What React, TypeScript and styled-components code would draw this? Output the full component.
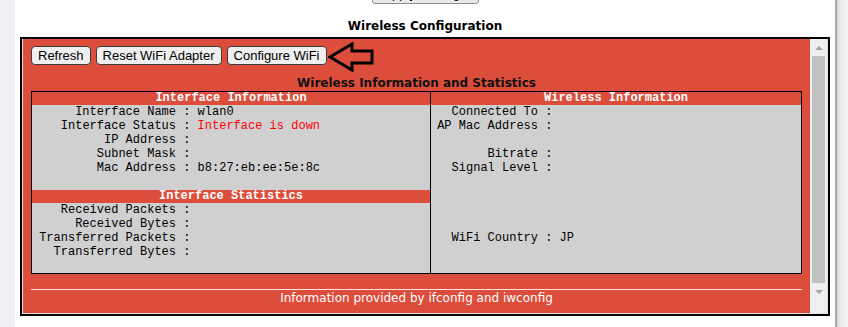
import React from "react";
import styled, { createGlobalStyle } from "styled-components";

const GlobalStyle = createGlobalStyle`
  html, body {
    margin: 0;
    padding: 0;
    background: #ffffff;
    overflow: hidden;
  }
`;

const Page = styled.div`
  display: flex;
  width: 848px;
  height: 327px;
  overflow: hidden;
`;

const LeftStrip = styled.div`
  width: 15px;
  flex: none;
  background: #eef0f5;
`;

const RightStrip = styled.div`
  width: 13px;
  flex: none;
  border-left: 2px solid #a9a9a9;
  background: linear-gradient(to right, #d9d9d9, #ececec 40%, #f2f2f2);
  box-sizing: border-box;
`;

const Main = styled.div`
  flex: 1;
  display: flex;
  flex-direction: column;
  align-items: center;
  background: #ffffff;
`;

const TopButton = styled.button`
  margin-top: -17px;
  width: 107px;
  height: 21px;
  border: 1px solid #8f8f8f;
  border-radius: 3px;
  background: #e9e9e9;
  font: 13px "Liberation Sans", Arial, sans-serif;
  color: #000;
  padding: 0;
`;

const PageTitle = styled.div`
  margin-top: 15px;
  height: 15px;
  font: bold 12px "DejaVu Sans", Verdana, sans-serif;
  line-height: 15px;
  color: #000;
`;

const Frame = styled.div`
  margin-top: 3px;
  width: 810px;
  height: 279px;
  box-sizing: border-box;
  border: 2px solid #000;
  display: flex;
`;

const Inner = styled.div`
  flex: 1;
  display: flex;
  border-left: 1px solid #e2e2e2;
  border-right: 1px solid #e2e2e2;
  border-bottom: 1px solid #e2e2e2;
`;

const Content = styled.div`
  flex: 1;
  background: #dd4d3b;
  padding: 7px 8px 0 8px;
  display: flex;
  flex-direction: column;
`;

const ScrollBar = styled.div`
  width: 17px;
  flex: none;
  background: #f0f0f0;
  display: flex;
  flex-direction: column;
  align-items: center;
`;

const Arrow = styled.div<{ $down?: boolean }>`
  height: 17px;
  width: 17px;
  display: flex;
  align-items: center;
  justify-content: center;
  &::after {
    content: "";
    border-left: 4px solid transparent;
    border-right: 4px solid transparent;
    ${(p) =>
      p.$down
        ? "border-top: 4px solid #a3a3a3;"
        : "border-bottom: 4px solid #a3a3a3;"}
  }
`;

const Thumb = styled.div`
  width: 13px;
  height: 227px;
  background: #c1c1c1;
`;

const ButtonRow = styled.div`
  display: flex;
  align-items: flex-start;
  gap: 5px;
  height: 19px;
`;

const Btn = styled.button`
  box-sizing: border-box;
  height: 19px;
  padding: 0 6px;
  border: 1px solid #3c3c3c;
  border-radius: 4px;
  background: #efefef;
  font: 13px "Liberation Sans", Arial, sans-serif;
  line-height: 17px;
  color: #000;
`;

const SectionTitle = styled.div`
  margin-top: 12px;
  height: 13px;
  font: bold 12px "DejaVu Sans", Verdana, sans-serif;
  line-height: 13px;
  text-align: center;
  color: #111;
`;

const Table = styled.div`
  margin-top: 1px;
  display: flex;
  border: 1px solid #000;
  height: 181px;
`;

const Column = styled.div<{ $width: number }>`
  width: ${(p) => p.$width}px;
  background: #d0d0d0;
  & + & {
    border-left: 1px solid #000;
  }
`;

const Header = styled.div<{ $gap?: boolean }>`
  height: 13px;
  margin-top: ${(p) => (p.$gap ? "1px" : "0")};
  background: #dd4d3b;
  color: #fff;
  text-align: center;
  font: bold 12px "Liberation Mono", "Courier New", monospace;
  line-height: 13px;
`;

const Row = styled.div`
  display: flex;
  height: 14px;
  font: 12px "Liberation Mono", "Courier New", monospace;
  line-height: 14px;
  color: #000;
  white-space: pre;
`;

const Label = styled.span<{ $width: number }>`
  width: ${(p) => p.$width}px;
  flex: none;
  text-align: right;
`;

const Value = styled.span<{ $alert?: boolean }>`
  color: ${(p) => (p.$alert ? "#ff0000" : "#000")};
`;

const Footer = styled.div`
  margin-top: 15px;
  border-top: 1px solid #fbe4e0;
  height: 17px;
  font: 12px "DejaVu Sans", Verdana, sans-serif;
  line-height: 16px;
  text-align: center;
  color: #fff;
`;

type Item = [string, string?, boolean?] | null;

const ifaceInfo: Item[] = [
  ["Interface Name", "wlan0"],
  ["Interface Status", "Interface is down", true],
  ["IP Address", ""],
  ["Subnet Mask", ""],
  ["Mac Address", "b8:27:eb:ee:5e:8c"],
  null,
];

const ifaceStats: Item[] = [
  ["Received Packets", ""],
  ["Received Bytes", ""],
  ["Transferred Packets", ""],
  ["Transferred Bytes", ""],
];

const wireless: Item[] = [
  ["Connected To", ""],
  ["AP Mac Address", ""],
  null,
  ["Bitrate", ""],
  ["Signal Level", ""],
  null,
  null,
  null,
  null,
  ["WiFi Country", "JP"],
];

const Rows = ({ items, width }: { items: Item[]; width: number }) => (
  <>
    {items.map((it, i) =>
      it ? (
        <Row key={i}>
          <Label $width={width}>{it[0]}</Label>
          {" : "}
          <Value $alert={it[2]}>{it[1]}</Value>
        </Row>
      ) : (
        <Row key={i} />
      )
    )}
  </>
);

const PointerArrow = () => (
  <svg width="46" height="30" viewBox="0 0 46 30" style={{ marginLeft: -4, marginTop: -4 }}>
    <path
      d="M2 15 L24 2 L24 9 L44 9 L44 21 L24 21 L24 28 Z"
      fill="none"
      stroke="#000"
      strokeWidth="3"
      strokeLinejoin="miter"
    />
  </svg>
);

export default function App() {
  return (
    <>
      <GlobalStyle />
      <Page>
        <LeftStrip />
        <Main>
          <TopButton>Apply Settings</TopButton>
          <PageTitle>Wireless Configuration</PageTitle>
          <Frame>
            <Inner>
              <Content>
                <ButtonRow>
                  <Btn>Refresh</Btn>
                  <Btn>Reset WiFi Adapter</Btn>
                  <Btn>Configure WiFi</Btn>
                  <PointerArrow />
                </ButtonRow>
                <SectionTitle>Wireless Information and Statistics</SectionTitle>
                <Table>
                  <Column $width={398}>
                    <Header>Interface Information</Header>
                    <Rows items={ifaceInfo} width={144} />
                    <Header $gap>Interface Statistics</Header>
                    <Rows items={ifaceStats} width={144} />
                  </Column>
                  <Column $width={370}>
                    <Header>Wireless Information</Header>
                    <Rows items={wireless} width={107} />
                  </Column>
                </Table>
                <Footer>Information provided by ifconfig and iwconfig</Footer>
              </Content>
              <ScrollBar>
                <Arrow />
                <Thumb />
                <Arrow $down />
              </ScrollBar>
            </Inner>
          </Frame>
        </Main>
        <RightStrip />
      </Page>
    </>
  );
}
